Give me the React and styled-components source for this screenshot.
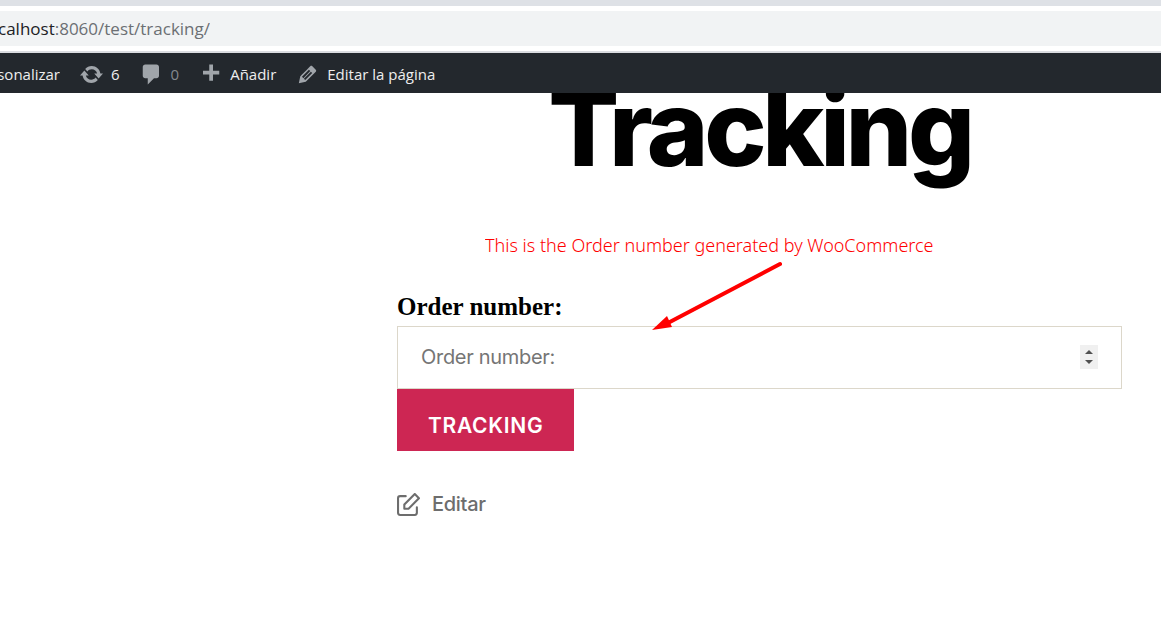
import React, { useState } from "react";
import styled, { createGlobalStyle } from "styled-components";

const GlobalStyle = createGlobalStyle`
  *, *::before, *::after { box-sizing: border-box; }
  html, body { margin: 0; background: #fff; overflow-x: hidden; }
  body { font-family: Inter, "Liberation Sans", sans-serif; color: #000; }
`;

const Page = styled.div`
  display: flex;
  flex-direction: column;
  min-height: 100vh;
  overflow: hidden;
`;

const BrowserBar = styled.header`
  border-top: 6px solid #dee1e6;
  border-bottom: 2px solid #dadce0;
  padding: 5px 0;
  background: #fff;
`;

const AddressBar = styled.div`
  display: flex;
  height: 35px;
  align-items: center;
  background: #f1f3f4;
  font-family: "Open Sans", "Noto Sans", sans-serif;
  font-size: 17px;
  font-weight: 400;
  color: #6b6f73;
`;

const Address = styled.div`
  display: flex;
  justify-content: flex-end;
  width: 210px;
  overflow: hidden;
  white-space: nowrap;
`;

const Host = styled.span`
  color: #202124;
`;

const AdminBar = styled.nav`
  position: relative;
  z-index: 1;
  display: flex;
  align-items: center;
  gap: 19px;
  height: 40px;
  padding-top: 2px;
  background: #23282d;
  font-family: "Open Sans", "Noto Sans", sans-serif;
  font-size: 15px;
  line-height: 24px;
`;

const AdminLink = styled.a`
  display: flex;
  align-items: center;
  gap: 7px;
  color: ${(p) => (p.$muted ? "#85898d" : "#eee")};
  text-decoration: none;
  white-space: nowrap;
  svg { width: 25px; height: 25px; fill: #a0a5aa; }
`;

const CutLink = styled(AdminLink)`
  justify-content: flex-end;
  width: 60px;
  overflow: hidden;
`;

const Main = styled.main`
  flex: 1;
  padding: 0 39px 40px 397px;
  overflow: hidden;
`;

const Title = styled.h1`
  margin: -18px 0 0;
  font-size: 105px;
  font-weight: 800;
  line-height: 105px;
  letter-spacing: -0.0415em;
  text-align: center;
`;

const Form = styled.form`
  position: relative;
  display: flex;
  flex-direction: column;
  align-items: flex-start;
  margin-top: 109px;
`;

const Label = styled.label`
  margin-bottom: 1px;
  font-family: "Liberation Serif", serif;
  font-size: 25px;
  font-weight: 700;
  line-height: 36px;
`;

const Field = styled.div`
  display: flex;
  align-items: center;
  width: 100%;
  height: 63px;
  padding: 0 23px 2px;
  border: 1px solid #dcd7ca;
  background: #fff;
`;

const NumberInput = styled.input`
  flex: 1;
  min-width: 0;
  padding: 0;
  border: 0;
  outline: 0;
  background: transparent;
  font: 400 20px/24px Inter, sans-serif;
  letter-spacing: -0.015em;
  appearance: textfield;
  &::placeholder { color: #757575; opacity: 1; }
  &::-webkit-inner-spin-button { appearance: none; }
`;

const Stepper = styled.div`
  display: flex;
  flex-direction: column;
  width: 18px;
  background: #f0f0f0;
`;

const StepButton = styled.button`
  display: flex;
  justify-content: center;
  align-items: ${(p) => (p.$down ? "flex-start" : "flex-end")};
  height: 12px;
  padding: 3px 0;
  border: 0;
  background: transparent;
  svg { width: 8px; height: 4px; fill: #505050; }
`;

const Submit = styled.button`
  height: 62px;
  padding: 12px 31px 0;
  border: 0;
  background: #cd2653;
  color: #fff;
  font: 600 21px/24px Inter, sans-serif;
  letter-spacing: 0.0333em;
  text-transform: uppercase;
`;

const EditLink = styled.a`
  display: inline-flex;
  align-items: center;
  gap: 12px;
  margin-top: 41px;
  color: #6d6d6d;
  font-size: 20px;
  font-weight: 500;
  line-height: 24px;
  letter-spacing: -0.015em;
  text-decoration: none;
  svg { width: 23px; height: 23px; fill: currentColor; }
`;

const Callout = styled.p`
  position: absolute;
  top: -56px;
  left: 88px;
  width: 451px;
  margin: 0;
  overflow: hidden;
  color: #f00;
  font: 300 18px/24px "Noto Sans", "Open Sans", sans-serif;
  white-space: nowrap;
`;

const Arrow = styled.svg`
  position: absolute;
  top: -31px;
  left: 253px;
  width: 136px;
  height: 80px;
  pointer-events: none;
`;

const dashicons = {
  update:
    "M10.2 3.28c3.53 0 6.43 2.61 6.92 6h2.08l-3.5 4-3.5-4h2.32c-.45-1.97-2.21-3.45-4.32-3.45-1.45 0-2.73.71-3.54 1.78L4.95 5.66C6.23 4.2 8.11 3.28 10.2 3.28zm-.4 13.44c-3.52 0-6.43-2.61-6.92-6H.8l3.5-4c1.17 1.33 2.33 2.67 3.5 4H5.48c.45 1.97 2.21 3.45 4.32 3.45 1.45 0 2.73-.71 3.54-1.78l1.71 1.95c-1.28 1.46-3.15 2.38-5.25 2.38z",
  comment:
    "M5 2h9c1.1 0 2 .9 2 2v7c0 1.1-.9 2-2 2h-2l-5 5v-5H5c-1.1 0-2-.9-2-2V4c0-1.1.9-2 2-2z",
  plus: "M17 7v3h-5v5H9v-5H4V7h5V2h3v5h5z",
  edit: "M13.89 3.39l2.71 2.72c.46.46.42 1.24.03 1.64l-8.01 8.02-5.56 1.16 1.16-5.58s7.6-7.63 7.99-8.03c.39-.39 1.22-.39 1.68.07zm-2.73 2.79l-5.59 5.61 1.11 1.11 5.54-5.65zm-2.97 8.23l5.58-5.6-1.07-1.08-5.59 5.6z",
};

function Dashicon({ name }) {
  return (
    <svg viewBox="0 0 20 20" aria-hidden="true">
      <path d={dashicons[name]} />
    </svg>
  );
}

function ComposeIcon() {
  return (
    <svg viewBox="0 0 18 18" aria-hidden="true">
      <path d="M14.727 11.176a.818.818 0 0 1 1.637 0v4.37A2.455 2.455 0 0 1 13.909 18H2.455A2.455 2.455 0 0 1 0 15.545V4.091a2.455 2.455 0 0 1 2.455-2.455h4.369a.818.818 0 0 1 0 1.637H2.455a.818.818 0 0 0-.819.818v11.454c0 .452.367.819.819.819h11.454a.818.818 0 0 0 .818-.819v-4.369zM6.545 9.339v2.116h2.116l7.364-7.364-2.116-2.116-7.364 7.364zM14.488.24l3.272 3.272a.818.818 0 0 1 0 1.157l-8.181 8.182a.818.818 0 0 1-.579.24H5.727a.818.818 0 0 1-.818-.818V9c0-.217.086-.425.24-.579L13.331.24a.818.818 0 0 1 1.157 0z" />
    </svg>
  );
}

export default function App() {
  const [order, setOrder] = useState("");
  const step = (n) => setOrder((value) => String(Number(value) + n));

  return (
    <>
      <GlobalStyle />
      <Page>
        <BrowserBar>
          <AddressBar>
            <Address>
              <Host>localhost</Host>
              <span>:8060/test/tracking/</span>
            </Address>
          </AddressBar>
        </BrowserBar>
        <AdminBar>
          <CutLink href="#personalizar">Personalizar</CutLink>
          <AdminLink href="#updates"><Dashicon name="update" />6</AdminLink>
          <AdminLink href="#comments" $muted><Dashicon name="comment" />0</AdminLink>
          <AdminLink href="#new"><Dashicon name="plus" />Añadir</AdminLink>
          <AdminLink href="#edit-page"><Dashicon name="edit" />Editar la página</AdminLink>
        </AdminBar>
        <Main>
          <Title>Tracking</Title>
          <Form onSubmit={(e) => e.preventDefault()}>
            <Label htmlFor="order">Order number:</Label>
            <Field>
              <NumberInput
                id="order"
                type="number"
                placeholder="Order number:"
                value={order}
                onChange={(e) => setOrder(e.target.value)}
              />
              <Stepper>
                <StepButton type="button" aria-label="Increase" onClick={() => step(1)}>
                  <svg viewBox="0 0 8 4"><path d="M0 4 4 0l4 4z" /></svg>
                </StepButton>
                <StepButton type="button" aria-label="Decrease" $down onClick={() => step(-1)}>
                  <svg viewBox="0 0 8 4"><path d="M0 0h8L4 4z" /></svg>
                </StepButton>
              </Stepper>
            </Field>
            <Submit type="submit">Tracking</Submit>
            <Callout>This is the Order number generated by WooCommerce</Callout>
            <Arrow viewBox="0 0 136 80" aria-hidden="true">
              <path d="M130 6 16 66" stroke="#f00" strokeWidth="4" strokeLinecap="round" />
              <path d="M2 72 17 58 22 69z" fill="#f00" />
            </Arrow>
          </Form>
          <EditLink href="#edit"><ComposeIcon />Editar</EditLink>
        </Main>
      </Page>
    </>
  );
}
